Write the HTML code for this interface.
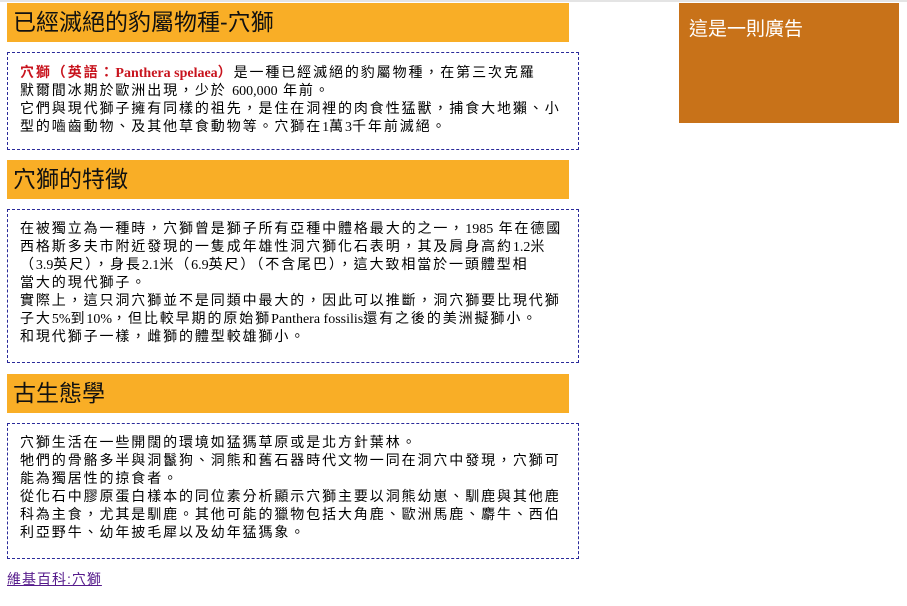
<!DOCTYPE html>
<html><head><meta charset="utf-8"><style>
body{margin:0;background:#fff;font-family:"Liberation Serif","Noto Sans CJK TC",serif;font-size:14px;color:#000;position:relative;width:907px;height:606px;overflow:hidden}
.top{position:absolute;left:0;top:0;width:907px;height:2px;background:#e4e4e4}
h1,h2{position:absolute;left:7px;width:556px;height:39px;margin:0;padding-left:6px;background:#f9ae26;font-family:"Liberation Sans","Noto Sans CJK TC",sans-serif;font-weight:normal;font-size:23px;line-height:39px;white-space:nowrap;color:#111}
.box{position:absolute;left:7px;width:546px;border:1px dashed #2a2a9a;padding:0 12px;line-height:18px;white-space:nowrap;letter-spacing:1.9px}
.box p{margin:0}
.box .l{letter-spacing:0}
.red{color:#c8141e;font-weight:bold}
.ad{position:absolute;left:679px;top:3px;width:220px;height:120px;background:#c87219;color:#fff;font-family:"Liberation Sans","Noto Sans CJK TC",sans-serif;font-size:19px}
.ad span{position:absolute;left:10px;top:11px}
a{position:absolute;left:7px;top:569px;color:#551a8b;font-family:"Liberation Sans","Noto Sans CJK TC",sans-serif;font-size:14px;letter-spacing:1px}
</style></head><body>
<div class="top"></div>
<h1 style="top:3px">已經滅絕的豹屬物種-穴獅</h1>
<div class="box" style="top:52px;height:96px"><p style="margin-top:12px"><span class="red">穴獅（英語：<span class="l">Panthera spelaea</span>）</span>是一種已經滅絕的豹屬物種，在第三次克羅<br>默爾間冰期於歐洲出現，少於 <span class="l">600,000</span> 年前。<br>它們與現代獅子擁有同樣的祖先，是住在洞裡的肉食性猛獸，捕食大地獺、小<br>型的嚙齒動物、及其他草食動物等。穴獅在<span class="l">1</span>萬<span class="l">3</span>千年前滅絕。</p></div>
<h2 style="top:160px">穴獅的特徵</h2>
<div class="box" style="top:209px;height:152px"><p style="margin-top:11px">在被獨立為一種時，穴獅曾是獅子所有亞種中體格最大的之一，<span class="l">1985</span> 年在德國<br>西格斯多夫市附近發現的一隻成年雄性洞穴獅化石表明，其及肩身高約<span class="l">1.2</span>米<br>（<span class="l">3.9</span>英尺），身長<span class="l">2.1</span>米（<span class="l">6.9</span>英尺）（不含尾巴），這大致相當於一頭體型相<br>當大的現代獅子。<br>實際上，這只洞穴獅並不是同類中最大的，因此可以推斷，洞穴獅要比現代獅<br>子大<span class="l">5%</span>到<span class="l">10%</span>，但比較早期的原始獅<span class="l">Panthera fossilis</span>還有之後的美洲擬獅小。<br>和現代獅子一樣，雌獅的體型較雄獅小。</p></div>
<h2 style="top:374px">古生態學</h2>
<div class="box" style="top:423px;height:134px"><p style="margin-top:11px">穴獅生活在一些開闊的環境如猛獁草原或是北方針葉林。<br>牠們的骨骼多半與洞鬣狗、洞熊和舊石器時代文物一同在洞穴中發現，穴獅可<br>能為獨居性的掠食者。<br>從化石中膠原蛋白樣本的同位素分析顯示穴獅主要以洞熊幼崽、馴鹿與其他鹿<br>科為主食，尤其是馴鹿。其他可能的獵物包括大角鹿、歐洲馬鹿、麝牛、西伯<br>利亞野牛、幼年披毛犀以及幼年猛獁象。</p></div>
<a href="#">維基百科:穴獅</a>
<div class="ad"><span>這是一則廣告</span></div>
</body></html>
